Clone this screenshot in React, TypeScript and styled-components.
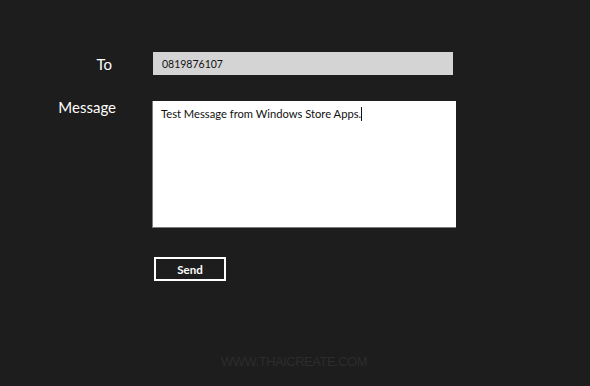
import React from "react";
import styled, { createGlobalStyle } from "styled-components";

const GlobalStyle = createGlobalStyle`
    html, body {
        margin: 0;
        padding: 0;
        background: #1d1d1d;
    }
    body {
        width: 590px;
        height: 386px;
        overflow: hidden;
        font-family: Lato, "Open Sans", sans-serif;
    }
`;

const Page = styled.div`
    width: 590px;
    height: 386px;
    box-sizing: border-box;
    padding: 52px 0 0 0;
    display: flex;
    flex-direction: column;
`;

const Form = styled.div`
    display: grid;
    grid-template-columns: 116px 304px;
    column-gap: 36px;
    row-gap: 26px;
    align-items: start;
`;

const Label = styled.div<{ shift?: number }>`
    color: #ffffff;
    font-size: 15px;
    text-align: right;
    padding-right: ${props => props.shift || 0}px;
    line-height: 20px;
`;

const ToLabel = styled(Label)`
    padding-top: 2px;
`;

const MessageLabel = styled(Label)`
    margin-top: -4px;
`;

const TextField = styled.input`
    width: 300px;
    height: 23px;
    box-sizing: border-box;
    margin: 0 0 0 1px;
    border: none;
    background: #d4d4d4;
    color: #111;
    font-family: inherit;
    font-size: 10.5px;
    padding: 0 0 0 9px;
    &:focus {
        outline: none;
    }
`;

const Caret = styled.span`
    display: inline-block;
    width: 1px;
    height: 14px;
    background: #111;
    vertical-align: -3px;
`;

const MessageBox = styled.div`
    width: 304px;
    height: 127px;
    box-sizing: border-box;
    border-left: 1px solid #7a7a7a;
    border-bottom: 1px solid #7a7a7a;
    background: #ffffff;
    color: #111;
    font-size: 11.2px;
    padding: 4px 8px;
    line-height: 18px;
`;

const ButtonRow = styled.div`
    padding: 29px 0 0 154px;
`;

const SendButton = styled.button`
    width: 72px;
    height: 24px;
    box-sizing: border-box;
    border: 2px solid #ffffff;
    background: #1d1d1d;
    color: #ffffff;
    font-family: inherit;
    font-size: 11.5px;
    font-weight: 700;
    padding: 0;
    cursor: pointer;
`;

const Footer = styled.div`
    margin-top: 73px;
    padding-left: 221px;
    color: #2c2c2c;
    font-family: "Liberation Sans", Arial, sans-serif;
    font-size: 13px;
    letter-spacing: -0.5px;
`;

const App = () => {
    return (
        <>
            <GlobalStyle />
            <Page>
                <Form>
                    <ToLabel shift={4}>To</ToLabel>
                    <TextField defaultValue="0819876107" readOnly />
                    <MessageLabel>Message</MessageLabel>
                    <MessageBox>
                        Test Message from Windows Store Apps.<Caret />
                    </MessageBox>
                </Form>
                <ButtonRow>
                    <SendButton>Send</SendButton>
                </ButtonRow>
                <Footer>WWW.THAICREATE.COM</Footer>
            </Page>
        </>
    );
};

export default App;
